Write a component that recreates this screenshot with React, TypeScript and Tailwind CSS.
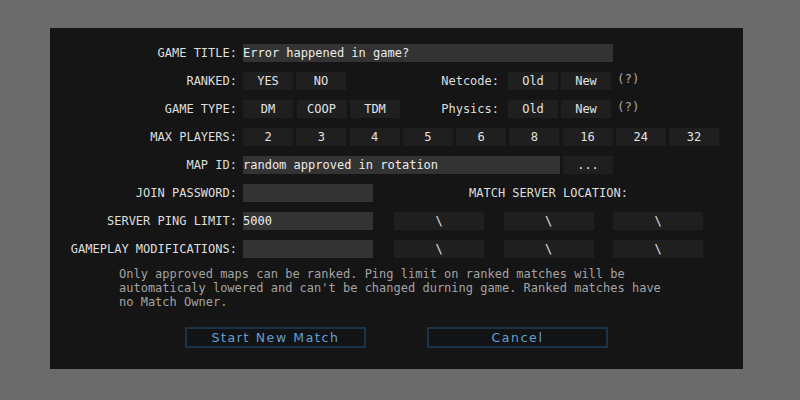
const mono = { fontFamily: '"DejaVu Sans Mono", "Liberation Mono", monospace' };

const Btn = ({ children, w = 'w-[50px]' }: { children: React.ReactNode; w?: string }) => (
  <div className={`${w} h-[18px] bg-[#1f1f1f] text-[#e2e2e2] flex items-center justify-center shrink-0`}>
    {children}
  </div>
);

const Field = ({ value = '', w }: { value?: string; w: string }) => (
  <div className={`${w} h-[18px] bg-[#333333] text-[#ececec] flex items-center whitespace-pre shrink-0`}>
    {value}
  </div>
);

const Row = ({ label, children }: { label: string; children?: React.ReactNode }) => (
  <div className="flex items-center h-[18px]">
    <div className="w-[187px] text-right text-[#dedede] shrink-0">{label}</div>
    <div className="ml-[6px] flex items-center h-[18px]">{children}</div>
  </div>
);

const Hint = () => <span className="self-start leading-[14px] ml-[6px] text-[#a8a8a8] text-[12.5px]">(?)</span>;

const Locations = () => (
  <div className="ml-[21px] flex gap-[19.5px]">
    <Btn w="w-[90px]">\</Btn>
    <Btn w="w-[90px]">\</Btn>
    <Btn w="w-[90px]">\</Btn>
  </div>
);

export default function App() {
  const players = ['2', '3', '4', '5', '6', '8', '16', '24', '32'];
  return (
    <div className="w-[800px] h-[400px] bg-[#6b6b6b] pt-[28px] pl-[50px]">
      <div
        className="w-[693px] h-[341px] bg-[#151515] pt-[16px] flex flex-col text-[12px] leading-[18px]"
        style={mono}
      >
        <div className="flex flex-col gap-[10px]">
          <Row label="GAME TITLE:">
            <Field w="w-[370px]" value="Error happened in game?" />
          </Row>
          <Row label="RANKED:">
            <div className="w-[157px] flex gap-[3px]">
              <Btn>YES</Btn>
              <Btn>NO</Btn>
            </div>
            <div className="w-[99px] text-right text-[#dedede]">Netcode:</div>
            <div className="ml-[9px] flex gap-[3px]">
              <Btn>Old</Btn>
              <Btn>New</Btn>
            </div>
            <Hint />
          </Row>
          <Row label="GAME TYPE:">
            <div className="w-[157px] flex gap-[3.5px]">
              <Btn>DM</Btn>
              <Btn>COOP</Btn>
              <Btn>TDM</Btn>
            </div>
            <div className="w-[99px] text-right text-[#dedede]">Physics:</div>
            <div className="ml-[9px] flex gap-[3px]">
              <Btn>Old</Btn>
              <Btn>New</Btn>
            </div>
            <Hint />
          </Row>
          <Row label="MAX PLAYERS:">
            <div className="flex gap-[3.25px]">
              {players.map((p) => (
                <Btn key={p}>{p}</Btn>
              ))}
            </div>
          </Row>
          <Row label="MAP ID:">
            <Field w="w-[317px]" value="random approved in rotation" />
            <div className="ml-[3px]">
              <Btn>...</Btn>
            </div>
          </Row>
          <Row label="JOIN PASSWORD:">
            <Field w="w-[130px]" />
            <div className="ml-[21px] w-[309px] text-center text-[#dedede]">MATCH SERVER LOCATION:</div>
          </Row>
          <Row label="SERVER PING LIMIT:">
            <Field w="w-[130px]" value="5000" />
            <Locations />
          </Row>
          <Row label="GAMEPLAY MODIFICATIONS:">
            <Field w="w-[130px]" />
            <Locations />
          </Row>
        </div>

        <p className="ml-[69px] mt-[9px] w-[550px] leading-[14px] text-[#a3a3a3]">
          Only approved maps can be ranked. Ping limit on ranked matches will be automaticaly lowered and can't be
          changed durning game. Ranked matches have no Match Owner.
        </p>

        <div className="mt-[18px] flex justify-center gap-[61px]">
          {['Start New Match', 'Cancel'].map((t) => (
            <button
              key={t}
              className="w-[181px] h-[21px] border-2 border-[#1c3247] bg-[#111315] text-[#62a0d4] text-[12.5px] tracking-[1.6px] flex items-center justify-center"
              style={{ fontFamily: '"DejaVu Sans", "Liberation Sans", sans-serif' }}
            >
              {t}
            </button>
          ))}
        </div>
      </div>
    </div>
  );
}
